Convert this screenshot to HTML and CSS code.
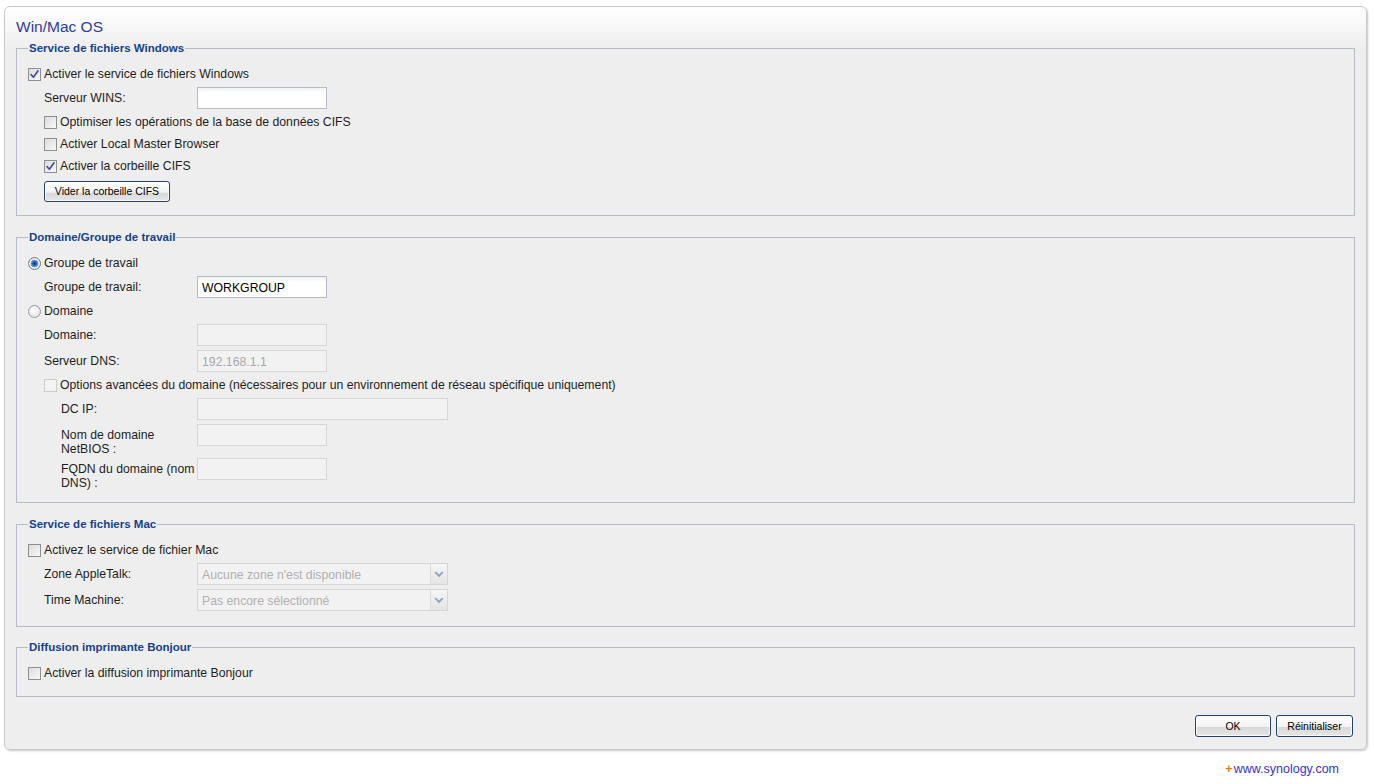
FILE: index.html
```html
<!DOCTYPE html>
<html lang="fr">
<head>
<meta charset="utf-8">
<title>Win/Mac OS</title>
<link rel="stylesheet" href="styles.css">
</head>
<body>
<div class="panel">
  <div class="title">Win/Mac OS</div>

  <fieldset class="fs fs-win">
    <legend>Service de fichiers Windows</legend>
    <div class="row"><span class="cb on"><svg viewBox="0 0 13 13"><path d="M3 6.5 L5.4 9.2 L10 2.8"/></svg></span><span class="lbl">Activer le service de fichiers Windows</span></div>
    <div class="field"><span class="flabel">Serveur WINS:</span><span class="input"></span></div>
    <div class="row sub"><span class="cb"></span><span class="lbl">Optimiser les opérations de la base de données CIFS</span></div>
    <div class="row sub"><span class="cb"></span><span class="lbl">Activer Local Master Browser</span></div>
    <div class="row sub"><span class="cb on"><svg viewBox="0 0 13 13"><path d="M3 6.5 L5.4 9.2 L10 2.8"/></svg></span><span class="lbl">Activer la corbeille CIFS</span></div>
    <div class="btnrow"><button class="btn btn-cifs">Vider la corbeille CIFS</button></div>
  </fieldset>

  <fieldset class="fs fs-dom">
    <legend>Domaine/Groupe de travail</legend>
    <div class="row"><span class="radio on"></span><span class="lbl">Groupe de travail</span></div>
    <div class="field"><span class="flabel">Groupe de travail:</span><span class="input">WORKGROUP</span></div>
    <div class="row"><span class="radio"></span><span class="lbl">Domaine</span></div>
    <div class="field"><span class="flabel">Domaine:</span><span class="input off"></span></div>
    <div class="field"><span class="flabel">Serveur DNS:</span><span class="input off">192.168.1.1</span></div>
    <div class="row sub"><span class="cb off"></span><span class="lbl">Options avancées du domaine (nécessaires pour un environnement de réseau spécifique uniquement)</span></div>
    <div class="field adv"><span class="flabel">DC IP:</span><span class="input off wide"></span></div>
    <div class="field adv"><span class="flabel">Nom de domaine NetBIOS :</span><span class="input off"></span></div>
    <div class="field adv"><span class="flabel">FQDN du domaine (nom DNS) :</span><span class="input off"></span></div>
  </fieldset>

  <fieldset class="fs fs-mac">
    <legend>Service de fichiers Mac</legend>
    <div class="row"><span class="cb"></span><span class="lbl">Activez le service de fichier Mac</span></div>
    <div class="field"><span class="flabel">Zone AppleTalk:</span><span class="select"><span class="sel-text">Aucune zone n'est disponible</span><span class="trigger"><svg viewBox="0 0 17 20"><path d="M4.5 8 L8.5 12 L12.5 8"/></svg></span></span></div>
    <div class="field"><span class="flabel">Time Machine:</span><span class="select"><span class="sel-text">Pas encore sélectionné</span><span class="trigger"><svg viewBox="0 0 17 20"><path d="M4.5 8 L8.5 12 L12.5 8"/></svg></span></span></div>
  </fieldset>

  <fieldset class="fs fs-bonjour">
    <legend>Diffusion imprimante Bonjour</legend>
    <div class="row"><span class="cb"></span><span class="lbl">Activer la diffusion imprimante Bonjour</span></div>
  </fieldset>

  <div class="actions">
    <button class="btn btn-ok">OK</button>
    <button class="btn btn-reset">Réinitialiser</button>
  </div>
</div>
<div class="footer"><span class="plus">+</span>www.synology.com</div>
</body>
</html>
```

FILE: styles.css
```css
* { box-sizing: border-box; }

html, body {
  margin: 0;
  padding: 0;
  background: #ffffff;
}

body {
  font-family: "Liberation Sans", Arial, sans-serif;
  font-size: 12.25px;
  color: #1e1e1e;
}

.panel {
  margin: 6px 0 0 4px;
  width: 1363px;
  height: 744px;
  padding: 10px 11px 0 11px;
  border: 1px solid #c9c9c9;
  border-radius: 6px;
  background: linear-gradient(to bottom, #ffffff 0px, #eeeeee 42px, #eeeeee 100%);
  box-shadow: 1px 1px 2px rgba(0, 0, 0, 0.22);
}

.title {
  font-size: 15.5px;
  line-height: 20px;
  height: 20px;
  color: #2e3d9c;
  margin: 0 0 4px 0;
}

.fs {
  margin: 0 0 14px 0;
  padding: 8px 11px 12px 11px;
  border: 1px solid #b7bac9;
  min-width: 0;
}

.fs legend {
  padding: 0 1px;
  font-size: 11.5px;
  font-weight: bold;
  line-height: 14px;
  color: #15428b;
}

.fs-win { padding-bottom: 13px; }
.fs-dom { padding-bottom: 12px; }
.fs-mac { padding-bottom: 13px; margin-bottom: 13px; }
.fs-bonjour { padding-bottom: 12px; margin-bottom: 18px; }

.row {
  display: flex;
  align-items: center;
  height: 22px;
}

.row.sub { padding-left: 16px; }

.lbl {
  margin-left: 3px;
  line-height: 14px;
  white-space: nowrap;
}

.cb {
  width: 13px;
  height: 13px;
  flex: none;
  border: 1px solid #8e8f8f;
  background: linear-gradient(to bottom right, #dcdcdc, #f8f8f8);
  position: relative;
}

.cb svg {
  position: absolute;
  left: -1px;
  top: -1px;
  width: 13px;
  height: 13px;
}

.cb svg path {
  fill: none;
  stroke: #3a4a94;
  stroke-width: 1.6;
  stroke-linecap: round;
  stroke-linejoin: round;
}

.cb.off {
  border-color: #cdcdcd;
  background: #f3f3f3;
}

.radio {
  width: 13px;
  height: 13px;
  flex: none;
  border-radius: 50%;
  border: 1px solid #9a9a9a;
  background: radial-gradient(circle at 40% 35%, #ffffff 0%, #e2e2e2 80%);
}

.radio.on {
  border-color: #7a7a7a;
  background: radial-gradient(circle at 50% 50%, #0a2c6a 0px, #2a6ac4 2px, #6aa4e4 3.6px, #f4f4f4 4.2px, #d4d4d4 100%);
}

.field {
  display: flex;
  align-items: flex-start;
  padding: 2px 0 2px 16px;
}

.flabel {
  width: 153px;
  flex: none;
  padding-top: 4px;
  margin-bottom: -2px;
  line-height: 14px;
}

.field.adv { padding-left: 33px; }
.field.adv .flabel { width: 136px; }

.input {
  width: 130px;
  height: 22px;
  flex: none;
  border: 1px solid #b7bac9;
  background: linear-gradient(to bottom, #eef2f2 0px, #ffffff 5px, #ffffff 100%);
  padding: 4px 4px 0 4px;
  line-height: 14px;
  color: #000;
}

.input.off {
  border-color: #d6d6d6;
  background: #f2f2f2;
  color: #a8a8a8;
}

.input.wide { width: 251px; }

.select {
  width: 251px;
  height: 22px;
  flex: none;
  display: flex;
  border: 1px solid #d6d6d6;
  background: #f2f2f2;
}

.sel-text {
  flex: 1;
  padding: 4px 4px 0 4px;
  line-height: 14px;
  color: #b0b0b0;
}

.trigger {
  width: 17px;
  flex: none;
  border-left: 1px solid #dcdcdc;
  background: linear-gradient(to bottom, #f6f6f6, #e4e4e4);
}

.trigger svg {
  width: 16px;
  height: 20px;
  display: block;
}

.trigger svg path {
  fill: none;
  stroke: #8fa1c2;
  stroke-width: 2;
}

.btnrow {
  padding-left: 16px;
  margin-top: 4px;
  display: flex;
}

.btn {
  font-family: "Liberation Sans", Arial, sans-serif;
  font-size: 10.5px;
  color: #000;
  height: 21px;
  padding: 0;
  border: 1px solid #26426a;
  border-radius: 3px;
  background: linear-gradient(to bottom, #ffffff 0%, #f2f2f2 55%, #d8d8d8 56%, #e6e6e6 100%);
  box-shadow: inset 0 0 0 1px rgba(255, 255, 255, 0.8);
  line-height: 19px;
}

.btn-cifs { width: 126px; }

.actions {
  display: flex;
  justify-content: flex-end;
  gap: 5px;
  padding-right: 2px;
}

.btn-ok { width: 76px; height: 22px; }
.btn-reset { width: 77px; height: 22px; }

.footer {
  width: 1367px;
  margin-top: 12px;
  padding-right: 28px;
  text-align: right;
  font-size: 12.5px;
  line-height: 15px;
  color: #3535c8;
}

.plus {
  color: #f07a18;
  font-weight: bold;
  margin-right: 1px;
}
```
